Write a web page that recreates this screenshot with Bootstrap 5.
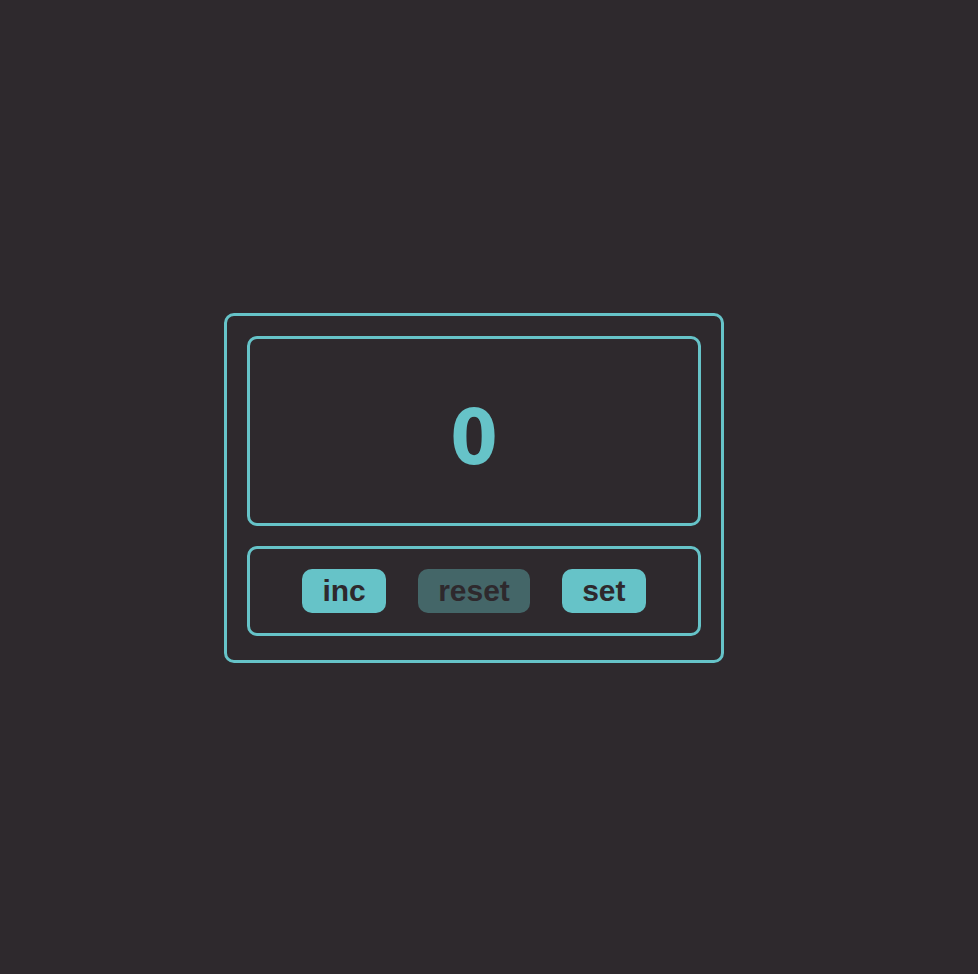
<!DOCTYPE html>
<html lang="en">
<head>
<meta charset="utf-8">
<meta name="viewport" content="width=device-width, initial-scale=1">
<title>Counter</title>
<link href="https://cdn.jsdelivr.net/npm/bootstrap@5.3.0/dist/css/bootstrap.min.css" rel="stylesheet">
<style>
:root { --ink: #2e292d; --accent: #66c3c8; }
body { background: var(--ink); color: var(--accent); }
.stage { padding-right: 30px; padding-top: 2px; }
.panel { border: 3px solid var(--accent); border-radius: 10px; }
.counter { width: 100%; max-width: 500px; padding: 20px 20px 24px; gap: 20px; }
.display { min-height: 190px; padding-top: 14px; font: 700 76px/1 "DejaVu Sans Condensed", "DejaVu Sans", sans-serif; }
.controls { padding: 20px; gap: 32px; }
.key {
  --bs-btn-bg: var(--accent); --bs-btn-color: var(--ink);
  --bs-btn-hover-bg: var(--accent); --bs-btn-hover-color: var(--ink);
  --bs-btn-active-bg: var(--accent); --bs-btn-active-color: var(--ink);
  --bs-btn-disabled-bg: #446668; --bs-btn-disabled-color: var(--ink);
  --bs-btn-disabled-opacity: 1;
  min-width: 84px; border: 0; border-radius: 10px; padding: 4px 20px;
  font: 700 30px/36px "Liberation Sans", sans-serif;
}
</style>
</head>
<body>
<main class="stage min-vh-100 d-flex align-items-center justify-content-center">
  <section class="counter panel d-flex flex-column" aria-label="Counter">
    <output class="display panel d-flex align-items-center justify-content-center">0</output>
    <div class="controls panel d-flex flex-wrap justify-content-center">
      <button type="button" class="btn key">inc</button>
      <button type="button" class="btn key" disabled>reset</button>
      <button type="button" class="btn key">set</button>
    </div>
  </section>
</main>
<script src="https://cdn.jsdelivr.net/npm/bootstrap@5.3.0/dist/js/bootstrap.bundle.min.js"></script>
</body>
</html>
